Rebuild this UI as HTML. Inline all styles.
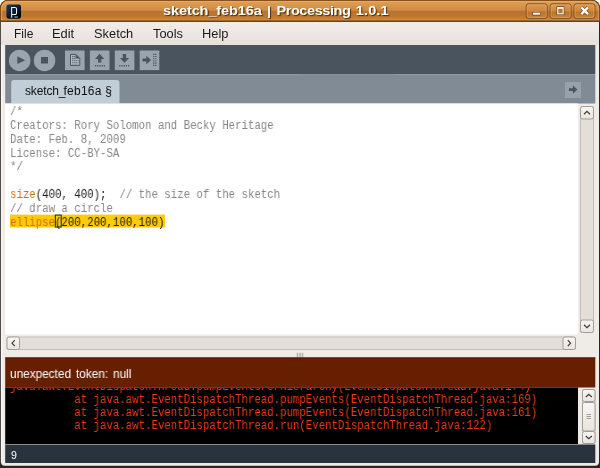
<!DOCTYPE html>
<html>
<head>
<meta charset="utf-8">
<style>
html,body{margin:0;padding:0;}
body{width:600px;height:468px;overflow:hidden;background:#fff;font-family:"Liberation Sans",sans-serif;position:relative;}
.abs{position:absolute;}
svg{position:absolute;left:0;top:0;}
.t{position:absolute;white-space:pre;will-change:transform;}
#title{left:0;top:2.3px;width:551.8px;word-spacing:1.15px;text-align:center;color:#fff;font-weight:bold;font-size:13.5px;line-height:18px;text-shadow:1px 1px 1px #4a2a08;transform:scaleX(1.08);transform-origin:275.9px 0;}
.menu{top:27px;font-size:12px;line-height:15px;color:#1a1a1a;transform:scaleX(1.07);transform-origin:0 0;}
#tabtext{left:24.5px;top:83.5px;font-size:12px;line-height:15px;color:#111;}
.code{left:10px;font-family:"Liberation Mono",monospace;font-size:12px;line-height:13.85px;color:#858585;transform:scaleX(.893);transform-origin:0 0;}
#statustext{left:9.9px;top:367px;font-size:12px;line-height:15px;color:#fff;word-spacing:1.65px;transform:scaleX(.984);transform-origin:0 0;}
#console{left:5px;top:387.5px;width:573px;height:57px;overflow:hidden;}
.con{font-family:"Liberation Mono",monospace;font-size:12px;line-height:12.85px;color:#ee3a12;transform:scaleX(.893);transform-origin:0 0;}
#linenum{left:10.6px;top:448.8px;font-size:10.6px;line-height:12px;color:#fff;}
</style>
</head>
<body>
<svg width="600" height="468" viewBox="0 0 600 468">
  <defs>
    <linearGradient id="tg" gradientUnits="userSpaceOnUse" x1="0" y1="0" x2="0" y2="22">
      <stop offset="0" stop-color="#c98a48"/>
      <stop offset="0.036" stop-color="#c98a48"/>
      <stop offset="0.055" stop-color="#ecae6c"/>
      <stop offset="0.10" stop-color="#e09c54"/>
      <stop offset="0.47" stop-color="#d08a42"/>
      <stop offset="0.505" stop-color="#b9732c"/>
      <stop offset="0.75" stop-color="#bd7830"/>
      <stop offset="0.915" stop-color="#ca8b41"/>
      <stop offset="0.948" stop-color="#6e4012"/>
      <stop offset="1" stop-color="#6e4012"/>
    </linearGradient>
    <linearGradient id="mg" x1="0" y1="0" x2="0" y2="1">
      <stop offset="0" stop-color="#f1ede9"/>
      <stop offset="1" stop-color="#e6e1db"/>
    </linearGradient>
    <linearGradient id="bg" x1="0" y1="0" x2="0" y2="1">
      <stop offset="0" stop-color="#f8f6f4"/>
      <stop offset="1" stop-color="#e8e4df"/>
    </linearGradient>
    <linearGradient id="wb" x1="0" y1="0" x2="0" y2="1">
      <stop offset="0" stop-color="#dc9a56"/>
      <stop offset="0.5" stop-color="#cd8840"/>
      <stop offset="0.55" stop-color="#bb742d"/>
      <stop offset="1" stop-color="#c5843c"/>
    </linearGradient>
    <linearGradient id="ig" x1="0" y1="0" x2="1" y2="1">
      <stop offset="0" stop-color="#123c64"/>
      <stop offset="0.45" stop-color="#0a2038"/>
      <stop offset="0.8" stop-color="#020508"/>
      <stop offset="1" stop-color="#000"/>
    </linearGradient>
  </defs>
  <!-- window frame -->
  <path d="M0 468V8a8 8 0 0 1 8-8h584a8 8 0 0 1 8 8v460z" fill="#2a2622"/>
  <path d="M0.900 461.700V22h598.100v439.700a4 4 0 0 1-4 4h-590.100a4 4 0 0 1-4-4z" fill="#efebe7"/>
  <rect x="0.900" y="22" width="1.500" height="440" fill="#f9f7f5"/>
  <!-- title bar -->
  <path d="M0 22V8a8 8 0 0 1 8-8h584a8 8 0 0 1 8 8v14z" fill="#6e4012"/>
  <path d="M0.800 22V8.200a7.400 7.400 0 0 1 7.400-7.400h583.600a7.400 7.400 0 0 1 7.400 7.400V22z" fill="url(#tg)"/>
  <path d="M1.600 20V8.400a6.600 6.600 0 0 1 6.600-6.600" fill="none" stroke="#f0b878" stroke-opacity=".6" stroke-width="1"/>
  <path d="M598.400 20V8.400a6.600 6.600 0 0 0-6.600-6.600" fill="none" stroke="#f0b878" stroke-opacity=".5" stroke-width="1"/>
  <!-- menubar -->
  <rect x="1" y="22" width="598" height="23" fill="url(#mg)"/>
  <!-- toolbar -->
  <rect x="5.200" y="45" width="390" height="29.200" fill="#4a545e"/>
  <rect x="300" y="45" width="295.300" height="29.200" fill="#4a545e"/>
  <!-- tab bar -->
  <rect x="5.200" y="74.200" width="590.100" height="29.300" fill="#818b95"/>
  <path d="M11.200 103.500V83a3 3 0 0 1 3-3h102.300a3 3 0 0 1 3 3v20.500z" fill="#c1cdd7"/>
  <rect x="565" y="82" width="16" height="16" fill="#97a1ac"/>
  <path d="M568.900 88.300h4v-2.800l4.500 4.100-4.500 4.100v-2.800h-4z" fill="#4a545e"/>
  <!-- toolbar buttons -->
  <circle cx="19.650" cy="60.450" r="10.750" fill="#9aa4ae"/>
  <circle cx="44.550" cy="60.450" r="10.750" fill="#9aa4ae"/>
  <path d="M17.300 56.300l7.900 3.900-7.900 3.900z" fill="#4a545e"/>
  <rect x="41" y="57" width="7" height="6.500" fill="#4a545e"/>
  <rect x="65" y="50.500" width="19.600" height="19.600" fill="#9aa4ae"/>
  <rect x="89.900" y="50.500" width="19.600" height="19.600" fill="#9aa4ae"/>
  <rect x="114.800" y="50.500" width="19.600" height="19.600" fill="#9aa4ae"/>
  <rect x="139.700" y="50.500" width="19.600" height="19.600" fill="#9aa4ae"/>
  <!-- new icon -->
  <path d="M70.500 54.400h5.300l4 4v7h-9.300z" fill="#b3bcc5" stroke="#4a545e" stroke-width="1"/>
  <path d="M75.600 54.200l4.400 4.400h-4.400z" fill="#4a545e"/>
  <path d="M72 56.400h3.300M72 58.300h3.300" stroke="#4a545e" stroke-width=".9" stroke-dasharray="1.500 .400"/>
  <path d="M72 60.300h6.600M72 62.200h6.600" stroke="#4a545e" stroke-width=".9" stroke-dasharray="1.400 .500" stroke-opacity=".85"/>
  <path d="M72 64h6.600" stroke="#4a545e" stroke-width=".8" stroke-dasharray="1.400 .500" stroke-opacity=".6"/>
  <!-- open icon -->
  <path d="M99.600 53.800l4.700 5.200h-3v3.500h-3.300v-3.500h-3z" fill="#4a545e"/>
  <path d="M95 65.700h10" stroke="#4a545e" stroke-width="1.500" stroke-dasharray="1.200 1"/>
  <!-- save icon -->
  <path d="M124.500 62.800l-4.700-4.800h3v-4h3.300v4h3z" fill="#4a545e"/>
  <path d="M119.200 65.700h11" stroke="#4a545e" stroke-width="1.500" stroke-dasharray="1.200 1"/>
  <!-- export icon -->
  <path d="M142.500 58.600h3.800v-2.900l4.700 4.400-4.700 4.400v-2.900h-3.800z" fill="#4a545e"/>
  <path d="M153.700 53.800v12.600M155.800 53.800v12.600" stroke="#4a545e" stroke-width="1.300" stroke-dasharray="1.100 1.100"/>
  <!-- editor -->
  <rect x="5" y="103.500" width="573" height="231" fill="#fff"/>
  <!-- highlight of line 9 -->
  <rect x="10" y="214.600" width="155" height="12.900" fill="#ffca08"/>
  <rect x="55.400" y="215.100" width="5.800" height="11.900" fill="none" stroke="#184a40" stroke-width="1.2"/>
  <!-- status -->
  <rect x="5.200" y="357.500" width="590.100" height="30" fill="#662000"/>
  <rect x="5.200" y="357.500" width="590.100" height=".9" fill="#451300"/>
  <!-- console -->
  <rect x="5.200" y="387.500" width="572.800" height="57" fill="#000"/>
  <!-- line bar -->
  <rect x="5.200" y="444" width="590.100" height="1" fill="#b8b0a8"/>
  <rect x="5.200" y="444.700" width="590.100" height="18.300" fill="#29333d"/>

  <!-- editor vertical scrollbar -->
  <rect x="580.500" y="106.500" width="13" height="226" rx="1.500" fill="#e3ded8" stroke="#c2bcb4" stroke-width="1"/>
  <rect x="580.500" y="106.500" width="13" height="12.500" rx="2" fill="url(#bg)" stroke="#a39c93" stroke-width="1"/>
  <rect x="580.500" y="320" width="13" height="12.500" rx="2" fill="url(#bg)" stroke="#a39c93" stroke-width="1"/>
  <path d="M584 114.200l3-2.800 3 2.800" fill="none" stroke="#3a3a3a" stroke-width="1.200"/>
  <path d="M584 324.800l3 2.800 3-2.800" fill="none" stroke="#3a3a3a" stroke-width="1.200"/>
  <!-- editor horizontal scrollbar -->
  <rect x="7" y="337" width="568.500" height="12.500" rx="1.500" fill="#e3ded8" stroke="#c2bcb4" stroke-width="1"/>
  <rect x="7" y="337" width="12.500" height="12.500" rx="2" fill="url(#bg)" stroke="#a39c93" stroke-width="1"/>
  <rect x="563" y="337" width="12.500" height="12.500" rx="2" fill="url(#bg)" stroke="#a39c93" stroke-width="1"/>
  <path d="M14.800 340.200l-2.800 3 2.800 3" fill="none" stroke="#3a3a3a" stroke-width="1.200"/>
  <path d="M567.800 340.200l2.800 3-2.800 3" fill="none" stroke="#3a3a3a" stroke-width="1.200"/>
  <!-- divider grip -->
  <path d="M297.500 352.800v4.200M300.100 352.800v4.200M302.500 352.800v4.200" stroke="#b4afa8" stroke-width="1.500"/>
  <!-- console scrollbar -->
  <rect x="582.500" y="389.500" width="12.500" height="54" rx="1.500" fill="#e3ded8" stroke="#c2bcb4" stroke-width="1"/>
  <rect x="582.500" y="389.500" width="12.500" height="12" rx="2" fill="url(#bg)" stroke="#a39c93" stroke-width="1"/>
  <rect x="582.500" y="402.500" width="12.500" height="28.500" rx="2" fill="url(#bg)" stroke="#a39c93" stroke-width="1"/>
  <rect x="582.500" y="431.500" width="12.500" height="12" rx="2" fill="url(#bg)" stroke="#a39c93" stroke-width="1"/>
  <path d="M585.800 397l3-2.800 3 2.800" fill="none" stroke="#3a3a3a" stroke-width="1.200"/>
  <path d="M585.800 436l3 2.800 3-2.800" fill="none" stroke="#3a3a3a" stroke-width="1.200"/>
  <path d="M586.500 414.500h4.500M586.500 416.500h4.500M586.500 418.500h4.500" stroke="#a39c93" stroke-width="1"/>

  <!-- app icon -->
  <rect x="6.400" y="4.600" width="14.600" height="14.200" rx="2.200" fill="url(#ig)"/>
  <path d="M11.650 17.700V7.400h3.300a1.600 1.600 0 0 1 1.600 1.600v3.900a1.600 1.600 0 0 1-1.600 1.600h-3.300" fill="none" stroke="#eef2f6" stroke-width="1.050"/>
  <rect x="14.300" y="16.400" width="3.600" height="1.300" fill="#8090a0"/>

  <!-- window buttons -->
  <g>
    <rect x="526.200" y="3.800" width="21" height="14.600" rx="2.300" fill="url(#wb)" stroke="#85501a" stroke-width="1"/>
    <rect x="550.100" y="3.800" width="21" height="14.600" rx="2.300" fill="url(#wb)" stroke="#85501a" stroke-width="1"/>
    <rect x="574" y="3.800" width="21" height="14.600" rx="2.300" fill="url(#wb)" stroke="#85501a" stroke-width="1"/>
    <rect x="527.200" y="4.800" width="19" height="12.600" rx="2" fill="none" stroke="#ecb478" stroke-opacity=".5" stroke-width="1"/>
    <rect x="551.100" y="4.800" width="19" height="12.600" rx="2" fill="none" stroke="#ecb478" stroke-opacity=".5" stroke-width="1"/>
    <rect x="575" y="4.800" width="19" height="12.600" rx="2" fill="none" stroke="#ecb478" stroke-opacity=".5" stroke-width="1"/>
    <rect x="532.300" y="12" width="8.700" height="3.400" rx=".6" fill="#6e4012"/>
    <rect x="533" y="12.600" width="7.300" height="2.100" fill="#fff"/>
    <rect x="556.500" y="6.300" width="7.900" height="8.800" rx=".6" fill="#6e4012"/>
    <rect x="557.200" y="7" width="6.500" height="7.400" fill="#fff"/>
    <rect x="558.300" y="8.800" width="4.300" height="4.500" fill="#b87430"/>
    <path d="M581.400 7.400l6.600 6.700M588 7.400l-6.600 6.700" stroke="#7a4814" stroke-width="3.700"/>
    <path d="M581.400 7.400l6.600 6.700M588 7.400l-6.600 6.700" stroke="#fff" stroke-width="2.300"/>
  </g>
</svg>

<div id="title" class="t"><span style="letter-spacing:-.13px">sketch_feb16a</span> | <span style="letter-spacing:-.42px">Processing</span> <span style="letter-spacing:.1px">1.0.1</span></div>

<div class="t menu" style="left:14.4px;transform:scaleX(.99)">File</div>
<div class="t menu" style="left:52px">Edit</div>
<div class="t menu" style="left:94px">Sketch</div>
<div class="t menu" style="left:153px">Tools</div>
<div class="t menu" style="left:202px">Help</div>

<div id="tabtext" class="t"><span style="letter-spacing:-.14px">sketch</span><span style="letter-spacing:-2px">_</span><span style="letter-spacing:.24px">feb16a §</span></div>

<div class="t code" style="top:105.9px;left:10.3px">/*
Creators: Rory Solomon and Becky Heritage
Date: Feb. 8, 2009
License: CC-BY-SA
*/

<span style="color:#d26d05">size</span><span style="color:#181818">(400, 400);</span>  // the size of the sketch
// draw a circle
<span style="color:#d26d05">ellipse</span><span style="color:#181818">(200,200,100,100)</span></div>

<div id="statustext" class="t">unexpected token: null</div>
<div id="console" class="abs">
<div class="t con" style="left:5.2px;top:-6.6px">java.awt.EventDispatchThread.pumpEventsForHierarchy(EventDispatchThread.java:174)
          at java.awt.EventDispatchThread.pumpEvents(EventDispatchThread.java:169)
          at java.awt.EventDispatchThread.pumpEvents(EventDispatchThread.java:161)
          at java.awt.EventDispatchThread.run(EventDispatchThread.java:122)</div>
</div>
<div id="linenum" class="t">9</div>
</body>
</html>
